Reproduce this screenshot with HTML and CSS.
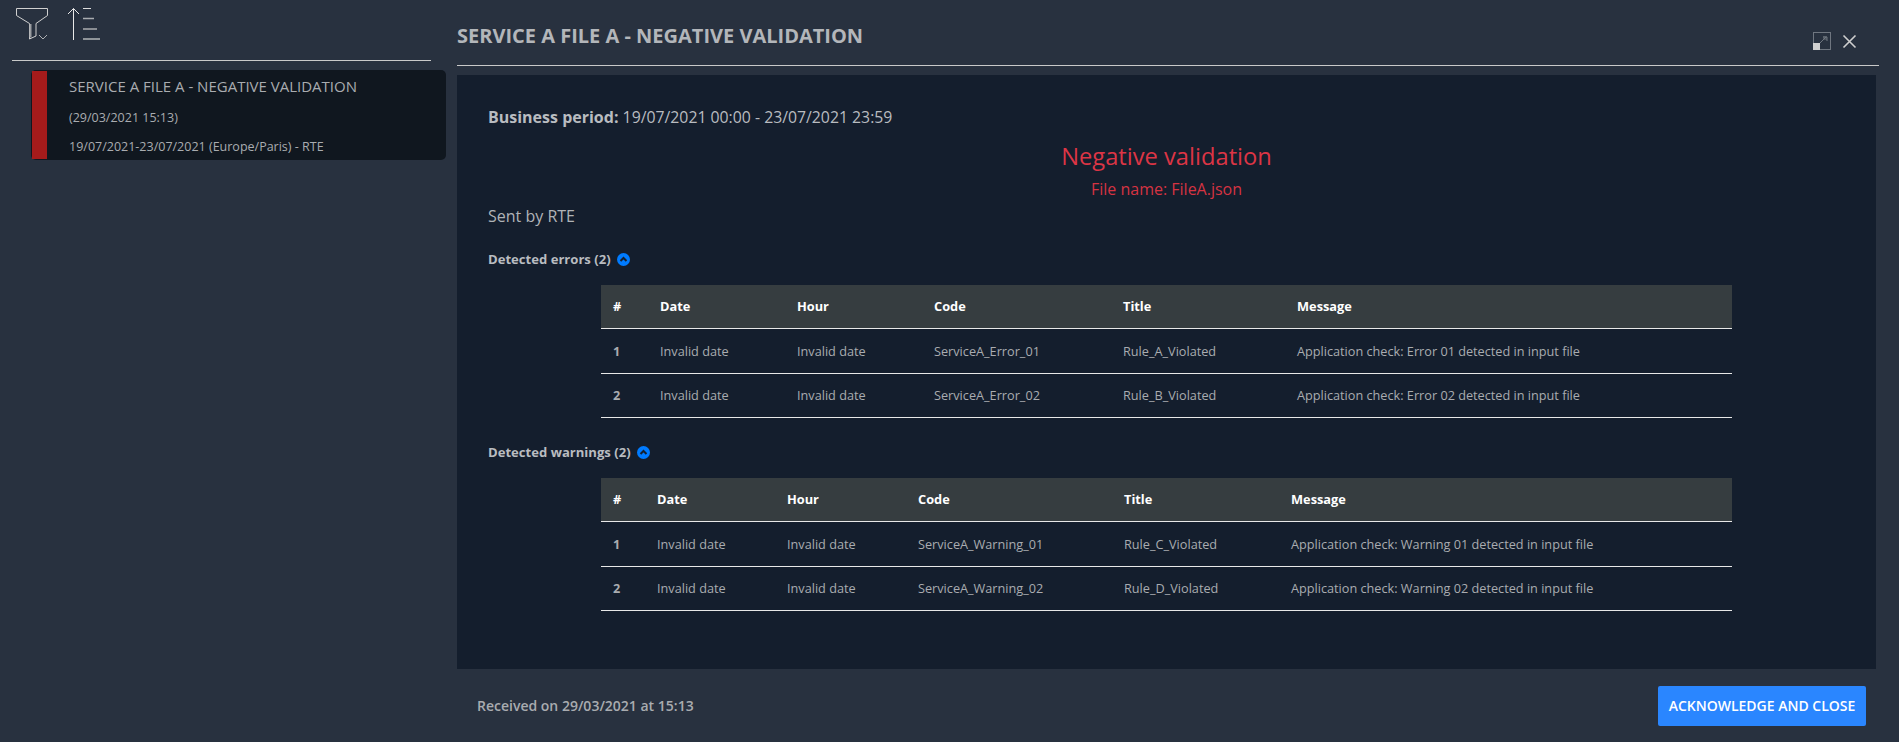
FILE: index.html
```html
<!DOCTYPE html>
<html lang="en">
<head>
    <meta charset="UTF-8">
    <title>Service A File A - Negative validation</title>
    <link rel="stylesheet" href="styles.css">
</head>
<body>
    <div class="feed">
        <div class="feed-tools">
            <svg width="34" height="34" viewBox="0 0 34 34" fill="none" stroke="#d0d0d0">
                <path d="M1.5 1.5H32.5V8.5L21 16.5V29L14.5 32V16.5L1.5 8.5Z"/>
                <path d="M15.5 17V30.5" stroke="#9a9da1" stroke-width="2"/>
                <path d="M24 28L28 32L32 28" stroke-width="0.8"/>
            </svg>
            <svg width="34" height="35" viewBox="0 0 34 35" fill="none" stroke="#a9acb0">
                <path d="M6.5 33V1.5M1 7L6.5 1.5L12 7" stroke="#e8e8e8"/>
                <path d="M16 1.5H24" stroke="#dddddd"/>
                <path d="M16 11.5H27M16 22H30" stroke-width="1.4"/>
                <path d="M16 32H33" stroke="#8f9499" stroke-width="2"/>
            </svg>
        </div>
        <div class="card">
            <div class="card-bar"></div>
            <div class="card-body">
                <div class="card-title">SERVICE A FILE A - NEGATIVE VALIDATION</div>
                <div class="card-time">(29/03/2021 15:13)</div>
                <div class="card-period">19/07/2021-23/07/2021 (Europe/Paris) - RTE</div>
            </div>
        </div>
    </div>
    <div class="detail">
        <div class="detail-head">
            <div class="detail-title">SERVICE A FILE A - NEGATIVE VALIDATION</div>
            <div class="detail-actions">
                <svg width="19" height="19" viewBox="0 0 19 19" fill="none">
                    <rect x="0.5" y="0.5" width="17" height="17" stroke="#6f7680"/>
                    <rect x="0" y="11" width="7" height="7" fill="#cfcfcf"/>
                    <rect x="10" y="4" width="4" height="4" fill="#4b525c"/>
                    <path d="M7 11L13 5M10 5H14V9" stroke="#6f7680"/>
                </svg>
                <svg width="15" height="15" viewBox="0 0 15 15" fill="none" stroke="#cfcfcf" stroke-width="1.6">
                    <path d="M1.5 1.5L13.5 13.5M13.5 1.5L1.5 13.5"/>
                </svg>
            </div>
        </div>
        <div class="content">
            <div class="period"><b>Business period:</b> <span class="period-value">19/07/2021 00:00 - 23/07/2021 23:59</span></div>
            <div class="headline">Negative validation</div>
            <div class="filename">File name: FileA.json</div>
            <div class="sent">Sent by RTE</div>

            <div class="section-title">Detected errors (2) <span class="chevron"><svg width="13" height="13" viewBox="0 0 13 13"><circle cx="6.5" cy="6.5" r="6.5" fill="#007bff"/><path d="M3.5 8L6.5 5L9.5 8" fill="none" stroke="#14202f" stroke-width="2"/></svg></span></div>
            <table class="grid grid-errors">
                <tr><th>#</th><th>Date</th><th>Hour</th><th>Code</th><th>Title</th><th>Message</th></tr>
                <tr><td><b>1</b></td><td>Invalid date</td><td>Invalid date</td><td>ServiceA_Error_01</td><td>Rule_A_Violated</td><td>Application check: Error 01 detected in input file</td></tr>
                <tr><td><b>2</b></td><td>Invalid date</td><td>Invalid date</td><td>ServiceA_Error_02</td><td>Rule_B_Violated</td><td>Application check: Error 02 detected in input file</td></tr>
            </table>

            <div class="section-title section-warnings">Detected warnings (2) <span class="chevron"><svg width="13" height="13" viewBox="0 0 13 13"><circle cx="6.5" cy="6.5" r="6.5" fill="#007bff"/><path d="M3.5 8L6.5 5L9.5 8" fill="none" stroke="#14202f" stroke-width="2"/></svg></span></div>
            <table class="grid grid-warnings">
                <tr><th>#</th><th>Date</th><th>Hour</th><th>Code</th><th>Title</th><th>Message</th></tr>
                <tr><td><b>1</b></td><td>Invalid date</td><td>Invalid date</td><td>ServiceA_Warning_01</td><td>Rule_C_Violated</td><td>Application check: Warning 01 detected in input file</td></tr>
                <tr><td><b>2</b></td><td>Invalid date</td><td>Invalid date</td><td>ServiceA_Warning_02</td><td>Rule_D_Violated</td><td>Application check: Warning 02 detected in input file</td></tr>
            </table>
        </div>
        <div class="detail-foot">
            <div class="received">Received on 29/03/2021 at 15:13</div>
            <button class="ack">ACKNOWLEDGE AND CLOSE</button>
        </div>
    </div>
</body>
</html>
```
FILE: styles.css
```css
html, body {
    height: 100%;
}

body {
    margin: 0;
    height: 742px;
    overflow: hidden;
    display: flex;
    background-color: #28313f;
    color: #b9bcc0;
    font-family: "Open Sans", sans-serif;
}

.feed {
    width: 457px;
    flex: none;
    box-sizing: border-box;
    padding-left: 12px;
}

.feed-tools {
    display: flex;
    gap: 18px;
    width: 419px;
    height: 61px;
    box-sizing: border-box;
    padding: 7px 0 0 3px;
    border-bottom: 1px solid #c9c9c9;
}

.card {
    display: flex;
    margin: 9px 0 0 19px;
    height: 90px;
    width: 415px;
    background-color: #10171f;
    border-radius: 5px;
}

.card-bar {
    width: 15px;
    margin: 1px 0 1px 1px;
    background-color: #a51b1b;
}

.card-body {
    padding-left: 22px;
}

.card-title {
    font-size: 15px;
    line-height: 20px;
    margin-top: 6px;
    color: #a9acb0;
}

.card-time {
    font-size: 12.5px;
    line-height: 17px;
    margin-top: 13px;
    color: #a9acb0;
}

.card-period {
    font-size: 12.5px;
    line-height: 17px;
    margin-top: 12px;
    color: #a9acb0;
}

.detail {
    flex: 1;
    display: flex;
    flex-direction: column;
    padding-right: 20px;
}

.detail-head {
    display: flex;
    justify-content: space-between;
    height: 65px;
    border-bottom: 1px solid #c9c9c9;
}

.detail-title {
    font-size: 20px;
    font-weight: 700;
    line-height: 26px;
    margin-top: 23px;
    color: #b3b6ba;
}

.detail-actions {
    display: flex;
    gap: 10px;
    padding: 32px 22px 0 0;
}

.detail-actions svg + svg {
    margin-top: 2px;
}

.content {
    margin-top: 9px;
    width: 1419px;
    height: 594px;
    box-sizing: border-box;
    padding: 30px 31px 0;
    background-color: #141e2d;
}

.period {
    font-size: 16px;
    line-height: 24px;
}

.period-value {
    font-size: 15.8px;
}

.headline {
    text-align: center;
    font-size: 23.7px;
    line-height: 32px;
    margin-top: 11px;
    color: #dc3545;
}

.filename {
    text-align: center;
    font-size: 16px;
    line-height: 22px;
    margin-top: 6px;
    color: #d63342;
}

.sent {
    font-size: 16px;
    line-height: 22px;
    margin-top: 5px;
    color: #b0b3b7;
}

.section-title {
    font-size: 13.1px;
    font-weight: 700;
    line-height: 18px;
    margin-top: 23px;
    display: flex;
    align-items: center;
    gap: 6px;
}

.section-warnings {
    margin-top: 25px;
}

.chevron {
    display: flex;
}

.grid {
    border-collapse: separate;
    border-spacing: 0;
    margin: 17px 0 0 113px;
    width: 1131px;
    table-layout: fixed;
    font-size: 12.7px;
    color: #a9acb0;
}

.grid th, .grid td {
    box-sizing: border-box;
    height: 44px;
    padding: 0 0 0 12px;
    text-align: left;
    border-bottom: 1px solid #e8e8e8;
}

.grid tr:nth-child(2) td {
    height: 45px;
}

.grid tr:nth-child(3) td {
    padding-bottom: 1px;
}

.grid th {
    padding-bottom: 2px;
    background-color: #363d40;
    color: #fff;
    font-size: 12.8px;
    font-weight: 700;
}

.grid-errors th:nth-child(1) { width: 47px; }
.grid-errors th:nth-child(2) { width: 137px; }
.grid-errors th:nth-child(3) { width: 137px; }
.grid-errors th:nth-child(4) { width: 189px; }
.grid-errors th:nth-child(5) { width: 174px; }

.grid-warnings th:nth-child(1) { width: 44px; }
.grid-warnings th:nth-child(2) { width: 130px; }
.grid-warnings th:nth-child(3) { width: 131px; }
.grid-warnings th:nth-child(4) { width: 206px; }
.grid-warnings th:nth-child(5) { width: 167px; }

.detail-foot {
    flex: 1;
    display: flex;
    justify-content: space-between;
    align-items: center;
    box-sizing: border-box;
    padding: 0 10px 0 20px;
    width: 1419px;
}

.received {
    font-size: 14px;
    font-weight: 600;
    color: #a9acb0;
}

.ack {
    height: 40px;
    width: 208px;
    padding: 0;
    border: none;
    border-radius: 2px;
    background-color: #2a86ff;
    color: #fff;
    font-family: "Open Sans", sans-serif;
    font-size: 14px;
    font-weight: 600;
}
```
